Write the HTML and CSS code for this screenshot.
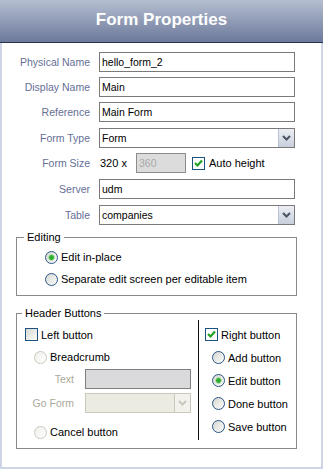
FILE: index.html
```html
<!DOCTYPE html>
<html lang="en">
<head>
  <meta charset="UTF-8" />
  <meta name="viewport" content="width=device-width, initial-scale=1" />
  <title>Form Properties</title>
  <link rel="stylesheet" href="styles.css">
</head>
<body>

<div class="header">
  <h1>Form Properties</h1>
</div>

<div class="panel">
  <div class="props">
    <div class="prop-row">
      <label class="prop-label" for="physName">Physical Name</label>
      <input class="text-field" type="text" id="physName" value="hello_form_2" />
    </div>
    <div class="prop-row">
      <label class="prop-label" for="dispName">Display Name</label>
      <input class="text-field" type="text" id="dispName" value="Main" />
    </div>
    <div class="prop-row">
      <label class="prop-label" for="reference">Reference</label>
      <input class="text-field" type="text" id="reference" value="Main Form" />
    </div>
    <div class="prop-row loose">
      <span class="prop-label">Form Type</span>
      <div class="select">
        <span class="select-value">Form</span>
        <span class="select-btn"><svg width="9" height="6" viewBox="0 0 9 6"><path d="M1 1 L4.5 4.5 L8 1" fill="none" stroke="#4b5567" stroke-width="2"/></svg></span>
      </div>
    </div>
    <div class="prop-row">
      <span class="prop-label">Form Size</span>
      <span class="size-text">320 x</span>
      <input class="text-field size-field" type="text" value="360" disabled />
      <span class="check on"><svg width="11" height="11" viewBox="0 0 11 11"><path d="M2 5 L4.5 7.5 L9 2.5" fill="none" stroke="#21a121" stroke-width="2.2"/></svg></span>
      <span class="check-text">Auto height</span>
    </div>
    <div class="prop-row loose">
      <label class="prop-label" for="server">Server</label>
      <input class="text-field" type="text" id="server" value="udm" />
    </div>
    <div class="prop-row loose">
      <span class="prop-label">Table</span>
      <div class="select">
        <span class="select-value">companies</span>
        <span class="select-btn"><svg width="9" height="6" viewBox="0 0 9 6"><path d="M1 1 L4.5 4.5 L8 1" fill="none" stroke="#4b5567" stroke-width="2"/></svg></span>
      </div>
    </div>
  </div>

  <fieldset class="group editing">
    <legend>Editing</legend>
    <div class="option"><span class="radio on"></span>Edit in-place</div>
    <div class="option"><span class="radio"></span>Separate edit screen per editable item</div>
  </fieldset>

  <fieldset class="group header-buttons">
    <legend>Header Buttons</legend>
    <div class="split">
      <div class="side side-left">
        <div class="check-row"><span class="check"></span>Left button</div>
        <div class="option sub"><span class="radio off"></span>Breadcrumb</div>
        <div class="mini-row">
          <span class="mini-label">Text</span>
          <span class="mini-field"></span>
        </div>
        <div class="mini-row go-form">
          <span class="mini-label">Go Form</span>
          <div class="select mini-select">
            <span class="select-value"></span>
            <span class="select-btn"><svg width="9" height="6" viewBox="0 0 9 6"><path d="M1 1 L4.5 4.5 L8 1" fill="none" stroke="#cac8bb" stroke-width="2"/></svg></span>
          </div>
        </div>
        <div class="option sub cancel"><span class="radio off"></span>Cancel button</div>
      </div>
      <div class="divider"></div>
      <div class="side side-right">
        <div class="check-row"><span class="check on"><svg width="11" height="11" viewBox="0 0 11 11"><path d="M2 5 L4.5 7.5 L9 2.5" fill="none" stroke="#21a121" stroke-width="2.2"/></svg></span>Right button</div>
        <div class="option sub tall"><span class="radio"></span>Add button</div>
        <div class="option sub tall"><span class="radio on"></span>Edit button</div>
        <div class="option sub tall"><span class="radio"></span>Done button</div>
        <div class="option sub tall"><span class="radio"></span>Save button</div>
      </div>
    </div>
  </fieldset>
</div>

</body>
</html>
```

FILE: styles.css
```css
body {
  margin: 0;
  width: 323px;
  font-family: "Liberation Sans", Arial, sans-serif;
  font-size: 11px;
  color: #000;
  background: #fff;
}
.header {
  height: 42px;
  border-bottom: 1px solid #2a3452;
  background: linear-gradient(#b5bed1, #6b799a);
  display: flex;
  align-items: center;
  justify-content: center;
  padding-bottom: 2px;
  box-sizing: border-box;
  height: 43px;
}
.header h1 {
  margin: 0;
  font-size: 17px;
  font-weight: bold;
  color: #fff;
}
.panel {
  height: 426px;
  box-sizing: border-box;
  border: 2px solid #cdd5e6;
  border-top: none;
  padding-top: 9px;
}

/* property rows */
.props {
  padding-left: 6px;
}
.prop-row {
  display: flex;
  align-items: center;
  height: 20px;
  margin-top: 5px;
}
.prop-row:first-child {
  margin-top: 0;
}
.prop-row.loose {
  margin-top: 6px;
}
.prop-label {
  width: 82px;
  margin-right: 9px;
  text-align: right;
  color: #666e96;
  font-size: 10.5px;
}
.text-field {
  width: 196px;
  height: 20px;
  box-sizing: border-box;
  border: 1px solid #7a7a7a;
  padding: 0 2px;
  margin: 0;
  font-family: inherit;
  font-size: 10.5px;
  color: #000;
  background: #fff;
  outline: none;
}
.select {
  width: 196px;
  height: 20px;
  box-sizing: border-box;
  border: 1px solid #7a7a7a;
  display: flex;
  background: #fff;
}
.select-value {
  flex: 1;
  padding-left: 2px;
  font-size: 10.5px;
  line-height: 18px;
}
.select-btn {
  width: 15px;
  border-left: 1px solid #b8c2d6;
  background: linear-gradient(#eceef3, #c8cfdc);
  display: flex;
  align-items: center;
  justify-content: center;
}
.size-text {
  margin-left: 1px;
  width: 36px;
  font-size: 11px;
}
.size-field {
  width: 50px;
  background: #dcdcdc;
  border-color: #8c8c8c;
  color: #a8a8a8;
}
.size-field + .check {
  margin-left: 6px;
}
.check-text {
  margin-left: 4px;
}

/* checkbox and radio */
.check {
  width: 13px;
  height: 13px;
  box-sizing: border-box;
  border: 1px solid #1c5180;
  background: linear-gradient(135deg, #d8d8d2, #fbfbf9);
  display: inline-flex;
  align-items: center;
  justify-content: center;
  flex-shrink: 0;
}
.check.on {
  background: #fff;
}
.radio {
  width: 13px;
  height: 13px;
  box-sizing: border-box;
  border-radius: 50%;
  border: 1px solid #2b5586;
  background: linear-gradient(135deg, #d6d6d0, #fdfdfc);
  flex-shrink: 0;
}
.radio.on {
  background: radial-gradient(circle, #1fa51f 0, #3cb43c 2px, #a9dca9 3px, transparent 3.6px), linear-gradient(135deg, #d6d6d0, #fdfdfc);
}
.radio.off {
  border-color: #cac8bb;
  background: linear-gradient(135deg, #eeeeea, #fff);
}

/* groups */
.group {
  margin: 6px 0 0 14px;
  width: 281px;
  box-sizing: border-box;
  border: 1px solid #8a8a8a;
  padding: 0;
  min-width: 0;
}
.group legend {
  margin-left: 7px;
  padding: 0 3px;
  line-height: 12px;
  font-size: 11px;
}
.editing {
  padding: 3px 0 5px 28px;
}
.editing legend {
  margin-left: -21px;
}
.option {
  display: flex;
  align-items: center;
  gap: 3px;
  height: 22px;
}
.header-buttons {
  margin-top: 11px;
  padding-bottom: 5px;
}
.header-buttons legend {
  margin-left: 5px;
}
.split {
  display: flex;
  padding-top: 1px;
}
.side {
  padding-top: 3px;
}
.side-left {
  width: 181px;
  box-sizing: border-box;
  padding-left: 8px;
}
.divider {
  width: 1px;
  height: 120px;
  background: #111;
}
.side-right {
  padding-left: 6px;
}
.check-row {
  display: flex;
  align-items: center;
  gap: 3px;
  height: 23px;
}
.option.sub {
  padding-left: 9px;
}
.option.tall {
  padding-left: 7px;
  height: 23px;
}
.option.cancel {
  margin-top: 8px;
}
.mini-row {
  display: flex;
  align-items: center;
  height: 20px;
  margin-top: 1px;
}
.mini-row.go-form {
  margin-top: 4px;
}
.mini-label {
  width: 49px;
  margin-right: 11px;
  text-align: right;
  color: #aca899;
  font-size: 10.5px;
}
.mini-field {
  width: 106px;
  height: 20px;
  box-sizing: border-box;
  border: 1px solid #7f7f7f;
  background: #dadadd;
}
.mini-select {
  width: 106px;
  border-color: #cac8bb;
  background: #ecebe1;
}
.mini-select .select-btn {
  border-left: 1px solid #cac8bb;
  background: #f2f1ec;
}
```
